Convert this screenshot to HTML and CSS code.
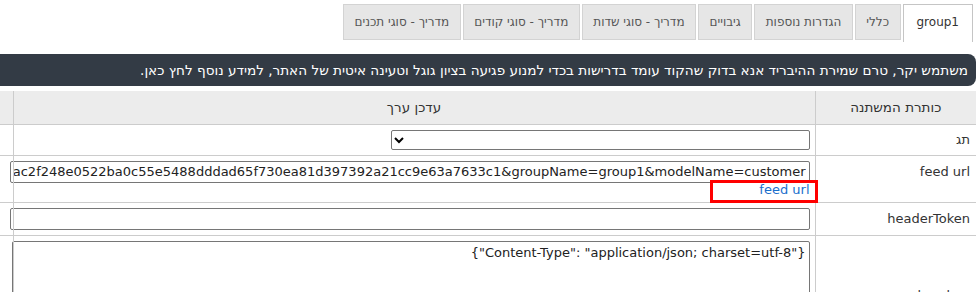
FILE: index.html
```html
<!DOCTYPE html>
<html lang="he" dir="rtl">
<head>
  <meta charset="UTF-8" />
  <meta name="viewport" content="width=device-width, initial-scale=1.0"/>
  <title>הגדרות היבריד</title>
  <link rel="stylesheet" href="styles.css">
</head>
<body>
  <ul class="tabs">
    <li class="active">group1</li>
    <li>כללי</li>
    <li>הגדרות נוספות</li>
    <li>גיבויים</li>
    <li>מדריך - סוגי שדות</li>
    <li>מדריך - סוגי קודים</li>
    <li>מדריך - סוגי תכנים</li>
  </ul>

  <div class="notice">משתמש יקר, טרם שמירת ההיבריד אנא בדוק שהקוד עומד בדרישות בכדי למנוע פגיעה בציון גוגל וטעינה איטית של האתר, למידע נוסף לחץ כאן.</div>

  <table class="vars">
    <colgroup>
      <col class="col-label">
      <col class="col-value">
      <col class="col-edge">
    </colgroup>
    <thead>
      <tr>
        <th>כותרת המשתנה</th>
        <th>עדכן ערך</th>
        <th></th>
      </tr>
    </thead>
    <tbody>
      <tr>
        <td class="label">תג</td>
        <td class="value"><select class="field-select"><option></option></select></td>
        <td></td>
      </tr>
      <tr>
        <td class="label label-top">feed url</td>
        <td class="value">
          <input class="field" type="text" value="https://hybrid.example.co.il/feed?key=3ac2f248e0522ba0c55e5488dddad65f730ea81d397392a21cc9e63a7633c1&amp;groupName=group1&amp;modelName=customer">
          <div class="link-row">
            <a href="#" class="feed-link">feed url</a>
            <span class="highlight"></span>
          </div>
        </td>
        <td></td>
      </tr>
      <tr>
        <td class="label">headerToken</td>
        <td class="value"><input class="field" type="text" value=""></td>
        <td></td>
      </tr>
      <tr>
        <td class="label">headers</td>
        <td class="value"><textarea class="field-area">{"Content-Type": "application/json; charset=utf-8"}</textarea></td>
        <td></td>
      </tr>
    </tbody>
  </table>
</body>
</html>
```

FILE: styles.css
```css
* { box-sizing: border-box; }

html, body {
  margin: 0;
  font-family: 'DejaVu Sans', Verdana, sans-serif;
  font-size: 13px;
  color: #333;
  background: #fff;
  overflow: hidden;
}

/* Tabs */
.tabs {
  display: flex;
  gap: 2px;
  list-style: none;
  margin: 0;
  padding: 4px 5px 0 0;
  height: 40px;
}

.tabs li {
  height: 36px;
  line-height: 34px;
  padding: 0 10.5px;
  font-size: 12px;
  color: #555;
  background-color: #e6e6e6;
  border: 1px solid #d3d3d3;
  white-space: nowrap;
}

.tabs li.active {
  height: 38px;
  background-color: #fff;
  color: #333;
  border-color: #c5c5c5;
  border-bottom: none;
  padding: 0 13px;
}

/* Notice bar */
.notice {
  margin: 14px 2px 0 0;
  height: 32px;
  line-height: 32px;
  padding: 0 8px;
  background-color: #333b45;
  color: #fff;
  font-size: 13.6px;
  white-space: nowrap;
  overflow: hidden;
  border-top-right-radius: 8px;
  border-bottom-right-radius: 8px;
}

/* Variables table */
.vars {
  width: 976px;
  margin: 5px 2px 0 0;
  border-collapse: collapse;
  table-layout: fixed;
}

.col-label { width: 161px; }
.col-value { width: 802px; }
.col-edge { width: 13px; }

.vars th {
  height: 33px;
  background-color: #ececec;
  font-weight: normal;
  font-size: 13.5px;
  text-align: center;
  border-bottom: 1px solid #ccc;
  border-left: 1px solid #ccc;
}

.vars td {
  border-bottom: 1px solid #ccc;
  border-left: 1px solid #ccc;
  vertical-align: middle;
}

.vars th:last-child,
.vars td:last-child {
  border-left: none;
}

.vars td.label {
  text-align: right;
  padding: 0 6px 0 0;
}

.vars td.label-top {
  vertical-align: top;
  padding-top: 8px;
}

.vars td.value {
  padding: 5px 5px 5px 0;
  text-align: right;
  white-space: nowrap;
}

.field-select {
  width: 419px;
  height: 20px;
  font: 13px 'DejaVu Sans', sans-serif;
  border: 1px solid #767676;
  border-radius: 2px;
  background: #fff;
  display: block;
  margin: 0 0 0 auto;
}

.field {
  display: block;
  width: 800px;
  height: 22px;
  padding: 0 3px;
  font: 13px 'DejaVu Sans', sans-serif;
  color: #222;
  border: 1px solid #767676;
  border-radius: 2px;
  margin-left: -3px;
}

.link-row {
  position: relative;
  height: 14px;
  line-height: 14px;
  text-align: right;
}

.feed-link {
  color: #1a6fcc;
  text-decoration: none;
}

/* red annotation box */
.highlight {
  position: absolute;
  top: -3px;
  right: -8px;
  width: 108px;
  height: 23px;
  border: 3px solid #f00;
}

.field-area {
  display: block;
  width: 798px;
  height: 110px;
  padding: 3px 3px;
  font: 13px 'DejaVu Sans', sans-serif;
  color: #222;
  border: 1px solid #767676;
  border-radius: 2px;
  resize: vertical;
}
```
